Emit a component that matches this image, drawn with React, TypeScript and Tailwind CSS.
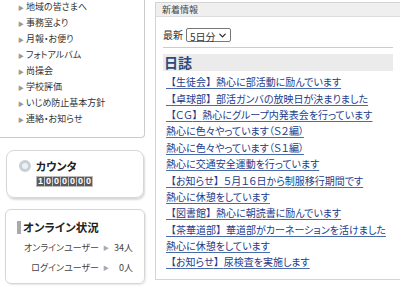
import { ChevronDown } from "lucide-react";

const menu = [
  "地域の皆さまへ",
  "事務室より",
  "月報・お便り",
  "フォトアルバム",
  "尚操会",
  "学校評価",
  "いじめ防止基本方針",
  "連絡・お知らせ",
];

const news = [
  "【生徒会】熱心に部活動に励んでいます",
  "【卓球部】部活ガンバの放映日が決まりました",
  "【ＣＧ】熱心にグループ内発表会を行っています",
  "熱心に色々やっています（Ｓ２編）",
  "熱心に色々やっています（Ｓ１編）",
  "熱心に交通安全運動を行っています",
  "【お知らせ】５月１６日から制服移行期間です",
  "熱心に休憩をしています",
  "【図書館】熱心に朝読書に励んでいます",
  "【茶華道部】華道部がカーネーションを活けました",
  "熱心に休憩をしています",
  "【お知らせ】尿検査を実施します",
];

// brackets keep full width, the rest is proportional
const Title = ({ text }: { text: string }) => (
  <>
    {text.split(/([【】])/).map((part, i) =>
      part === "【" || part === "】" ? (
        <span key={i} className="[font-feature-settings:normal]">
          {part}
        </span>
      ) : (
        part
      )
    )}
  </>
);

const Counter = ({ value }: { value: string }) => (
  <div className="flex gap-px bg-[#bbb] p-px">
    {value.split("").map((d, i) => (
      <span
        key={i}
        className="w-[7px] h-[9px] bg-[#5a5a5a] text-white text-[9px] leading-[9px] font-bold text-center font-['Liberation_Sans',sans-serif]"
      >
        {d}
      </span>
    ))}
  </div>
);

export default function App() {
  return (
    <div className="w-[400px] h-[286px] bg-white flex overflow-hidden text-[#333] font-['Noto_Sans_CJK_JP',sans-serif] [font-feature-settings:'palt']">
      {/* left column */}
      <div className="w-[145px] shrink-0 flex flex-col">
        <ul className="-mt-px pb-[10px] border-r border-b border-[#ccc] rounded-br-sm">
          {menu.map((m) => (
            <li key={m} className="h-4 flex items-center pl-[18px] text-[9px]">
              <span className="text-[#999] text-[6px] mr-[2px]">▶</span>
              {m}
            </li>
          ))}
        </ul>

        <div className="mt-3 ml-[6px] w-[138px] h-[48px] rounded-lg border border-[#d6d6d6] shadow-[1px_2px_2px_rgba(0,0,0,0.15)] pl-3 pt-[8px]">
          <div className="flex items-center gap-[5px]">
            <span className="w-[12px] h-[12px] rounded-full border-[3px] border-[#c7cfd7] bg-[#eef1f4]" />
            <span className="text-[11px] font-bold leading-[14px] text-[#222]">カウンタ</span>
          </div>
          <div className="ml-[17px] mt-[3px] flex">
            <Counter value="1000000" />
          </div>
        </div>

        <div className="mt-[11px] ml-[5px] w-[140px] h-[75px] rounded-md border border-[#d6d6d6] shadow-[1px_1px_2px_rgba(0,0,0,0.1)] pt-[10px] pr-[11px]">
          <div className="flex items-center pl-[11px]">
            <span className="w-[4px] h-[13px] bg-[#aaa] mr-[2px]" />
            <span className="text-[11.5px] font-bold leading-[14px] text-[#222]">オンライン状況</span>
          </div>
          <div className="mt-[8px] flex flex-col gap-[9px] text-[9px] text-[#444] leading-[11px]">
            <div className="flex justify-end items-center">
              オンラインユーザー
              <span className="text-[#aaa] text-[6px] mx-[4px]">▶</span>
              <span className="w-[20px] text-right">34人</span>
            </div>
            <div className="flex justify-end items-center">
              ログインユーザー
              <span className="text-[#aaa] text-[6px] mx-[4px]">▶</span>
              <span className="w-[20px] text-right">0人</span>
            </div>
          </div>
        </div>
      </div>

      {/* right panel */}
      <div className="ml-[10px] mt-[2px] h-[278px] flex-1 border-l border-t border-b border-[#d4d4d4]">
        <div className="h-[14px] bg-[#efefef] border-b border-[#ddd] text-[9px] leading-[14px] pl-[6px] text-[#444]">
          新着情報
        </div>
        <div className="px-[7px]">
          <div className="mt-[10px] flex items-center gap-[3px] text-[10px] pb-[5px] border-b border-[#ccc]">
            <span>最新</span>
            <div className="relative w-[45px] h-[14px] border border-[#777] rounded-[2px] bg-white">
              <select className="appearance-none w-full h-full text-[10px] leading-[12px] pl-[3px] bg-transparent outline-none">
                <option>5日分</option>
              </select>
              <ChevronDown
                className="absolute right-[2px] top-[1px] w-[11px] h-[11px] pointer-events-none text-[#222]"
                strokeWidth={2.5}
              />
            </div>
          </div>
          <div className="mt-[6px] h-[17px] bg-[#ebebeb] flex items-center pl-[1px] text-[14px] font-bold text-[#2c4a7c]">
            日誌
          </div>
          <ul className="mt-[3px] flex flex-col pl-[3px]">
            {news.map((n, i) => (
              <li key={i} className="h-[16.4px] flex items-center">
                <a className="text-[10px] leading-[12px] text-[#1c3c8c] underline underline-offset-2 decoration-[#4a6aa8] whitespace-nowrap">
                  <Title text={n} />
                </a>
              </li>
            ))}
          </ul>
        </div>
      </div>
    </div>
  );
}
